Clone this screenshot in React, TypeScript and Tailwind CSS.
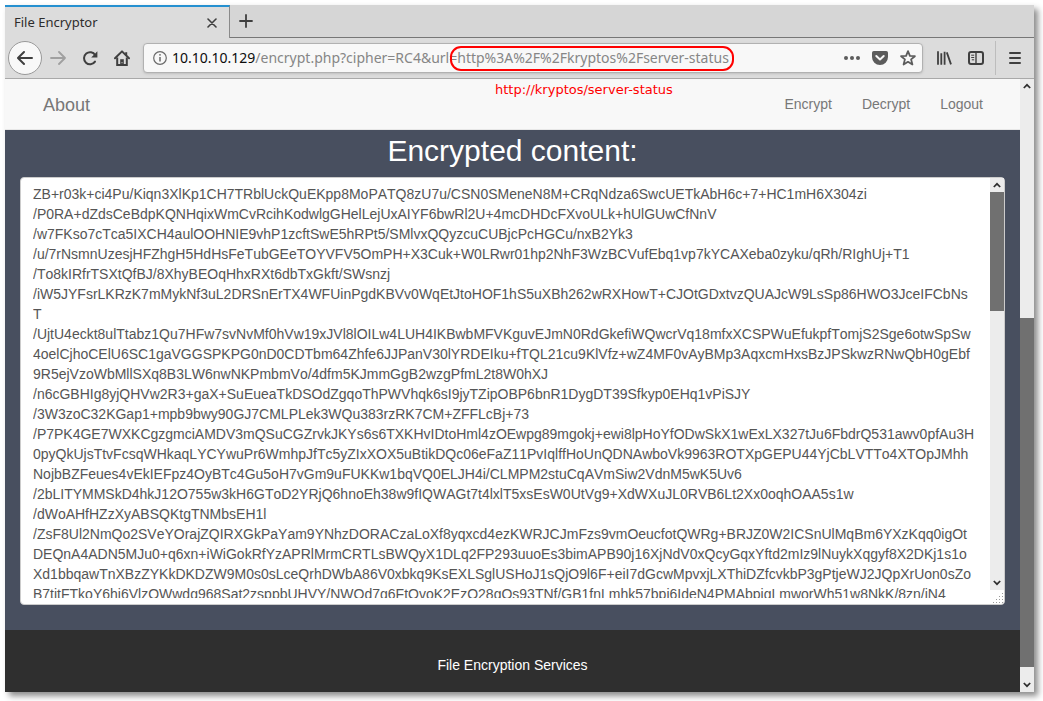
import React from "react";

const CIPHER_LINES = [
  "ZB+r03k+ci4Pu/Kiqn3XlKp1CH7TRblUckQuEKpp8MoPATQ8zU7u/CSN0SMeneN8M+CRqNdza6SwcUETkAbH6c+7+HC1mH6X304zi",
  "/P0RA+dZdsCeBdpKQNHqixWmCvRcihKodwlgGHelLejUxAIYF6bwRl2U+4mcDHDcFXvoULk+hUlGUwCfNnV",
  "/w7FKso7cTca5IXCH4aulOOHNIE9vhP1zcftSwE5hRPt5/SMlvxQQyzcuCUBjcPcHGCu/nxB2Yk3",
  "/u/7rNsmnUzesjHFZhgH5HdHsFeTubGEeTOYVFV5OmPH+X3Cuk+W0LRwr01hp2NhF3WzBCVufEbq1vp7kYCAXeba0zyku/qRh/RIghUj+T1",
  "/To8kIRfrTSXtQfBJ/8XhyBEOqHhxRXt6dbTxGkft/SWsnzj",
  "/iW5JYFsrLKRzK7mMykNf3uL2DRSnErTX4WFUinPgdKBVv0WqEtJtoHOF1hS5uXBh262wRXHowT+CJOtGDxtvzQUAJcW9LsSp86HWO3JceIFCbNs",
  "T",
  "/UjtU4eckt8ulTtabz1Qu7HFw7svNvMf0hVw19xJVl8lOILw4LUH4IKBwbMFVKguvEJmN0RdGkefiWQwcrVq18mfxXCSPWuEfukpfTomjS2Sge6otwSpSw",
  "4oelCjhoCElU6SC1gaVGGSPKPG0nD0CDTbm64Zhfe6JJPanV30lYRDEIku+fTQL21cu9KlVfz+wZ4MF0vAyBMp3AqxcmHxsBzJPSkwzRNwQbH0gEbf",
  "9R5ejVzoWbMllSXq8B3LW6nwNKPmbmVo/4dfm5KJmmGgB2wzgPfmL2t8W0hXJ",
  "/n6cGBHIg8yjQHVw2R3+gaX+SuEueaTkDSOdZgqoThPWVhqk6sI9jyTZipOBP6bnR1DygDT39Sfkyp0EHq1vPiSJY",
  "/3W3zoC32KGap1+mpb9bwy90GJ7CMLPLek3WQu383rzRK7CM+ZFFLcBj+73",
  "/P7PK4GE7WXKCgzgmciAMDV3mQSuCGZrvkJKYs6s6TXKHvIDtoHml4zOEwpg89mgokj+ewi8lpHoYfODwSkX1wExLX327tJu6FbdrQ531awv0pfAu3H",
  "0pyQkUjsTtvFcsqWHkaqLYCYwuPr6WmhpJfTc5yZIxXOX5uBtikDQc06eFaZ11PvIqlffHoUnQDNAwboVk9963ROTXpGEPU44YjCbLVTTo4XTOpJMhh",
  "NojbBZFeues4vEkIEFpz4OyBTc4Gu5oH7vGm9uFUKKw1bqVQ0ELJH4i/CLMPM2stuCqAVmSiw2VdnM5wK5Uv6",
  "/2bLITYMMSkD4hkJ12O755w3kH6GToD2YRjQ6hnoEh38w9fIQWAGt7t4lxlT5xsEsW0UtVg9+XdWXuJL0RVB6Lt2Xx0oqhOAA5s1w",
  "/dWoAHfHZzXyABSQKtgTNMbsEH1l",
  "/ZsF8Ul2NmQo2SVeYOrajZQIRXGkPaYam9YNhzDORACzaLoXf8yqxcd4ezKWRJCJmFzs9vmOeucfotQWRg+BRJZ0W2ICSnUlMqBm6YXzKqq0igOt",
  "DEQnA4ADN5MJu0+q6xn+iWiGokRfYzAPRlMrmCRTLsBWQyX1DLq2FP293uuoEs3bimAPB90j16XjNdV0xQcyGqxYftd2mIz9lNuykXqgyf8X2DKj1s1o",
  "Xd1bbqawTnXBzZYKkDKDZW9M0s0sLceQrhDWbA86V0xbkq9KsEXLSglUSHoJ1sQjO9l6F+eiI7dGcwMpvxjLXThiDZfcvkbP3gPtjeWJ2JQpXrUon0sZo",
  "B7titFTkoY6hi6VlzOWwdg968Sat2zsppbUHVY/NWOd7g6FtOvoK2EzO28gOs93TNf/GB1fnLmhk57bpi6IdeN4PMAbpigLmworWh51w8NkK/8zn/iN4",
];

function Chevron({ down = false }: { down?: boolean }) {
  return (
    <svg width="8" height="6" viewBox="0 0 8 6" fill="none" stroke="#2e2e2e" strokeWidth="1.7">
      <path d={down ? "M0.8 1 4 4.2 7.2 1" : "M0.8 5 4 1.8 7.2 5"} />
    </svg>
  );
}

function ToolButton({ label, children }: { label: string; children: React.ReactNode }) {
  return (
    <button aria-label={label} className="flex h-8 w-8 shrink-0 items-center justify-center text-[#3f3f3f]">
      {children}
    </button>
  );
}

function TabStrip() {
  return (
    <div className="flex h-[33px] bg-[#d6d6d6]">
      <div className="flex w-[225px] items-center justify-between border-t-2 border-r border-t-[#2590d0] border-r-[#8a8a8a] bg-[#dcdcdc] pr-3 pl-[9px]">
        <span className="text-[13px] text-[#2d2d2d]">File Encryptor</span>
        <button aria-label="Close tab">
          <svg width="10" height="10" viewBox="0 0 10 10" stroke="#3f3f3f" strokeWidth="1.6" strokeLinecap="round">
            <path d="M1 1l8 8M9 1 1 9" />
          </svg>
        </button>
      </div>
      <div className="flex flex-1 items-center border-b border-[#777777] pl-[9px]">
        <button aria-label="New tab">
          <svg width="14" height="14" viewBox="0 0 14 14" stroke="#3f3f3f" strokeWidth="1.8" strokeLinecap="round">
            <path d="M7 1v12M1 7h12" />
          </svg>
        </button>
      </div>
    </div>
  );
}

function AddressBar() {
  return (
    <div className="relative ml-[5px] flex h-[30px] min-w-0 flex-1 items-center rounded border border-[#b1b1b1] bg-[#f8f8f8] pr-[6px] pl-[9px] shadow-sm">
      <svg className="shrink-0" width="14" height="14" viewBox="0 0 14 14" fill="none" stroke="#6a6a6a">
        <circle cx="7" cy="7" r="6.3" strokeWidth="1.2" />
        <path d="M7 6v4.6" strokeWidth="1.5" />
        <circle cx="7" cy="3.8" r="0.9" fill="#6a6a6a" stroke="none" />
      </svg>
      <label htmlFor="address" className="pl-[5px] text-sm text-[#0c0c0c]">
        10.10.10.129
      </label>
      <input
        id="address"
        className="min-w-0 flex-1 bg-transparent text-sm text-[#868686] outline-none"
        defaultValue="/encrypt.php?cipher=RC4&url=http%3A%2F%2Fkryptos%2Fserver-status"
      />
      <div className="flex shrink-0 items-center gap-3 text-[#5c5c5c]">
        <button aria-label="Page actions">
          <svg width="16" height="16" viewBox="0 0 16 16" fill="currentColor">
            <circle cx="2" cy="8" r="2" />
            <circle cx="8" cy="8" r="2" />
            <circle cx="14" cy="8" r="2" />
          </svg>
        </button>
        <button aria-label="Save to Pocket">
          <svg width="16" height="16" viewBox="0 0 16 16">
            <path d="M1.8 1h12.4A1.8 1.8 0 0 1 16 2.8V7A8 8 0 0 1 0 7V2.8A1.8 1.8 0 0 1 1.8 1z" fill="currentColor" />
            <path d="M4.3 6 8 9.5 11.7 6" fill="none" stroke="#f8f8f8" strokeWidth="2" strokeLinecap="round" strokeLinejoin="round" />
          </svg>
        </button>
        <button aria-label="Bookmark this page">
          <svg width="16" height="16" viewBox="0 0 16 16" fill="none" stroke="currentColor" strokeWidth="1.8" strokeLinejoin="round">
            <path d="M8 1.2 9.9 5.8 14.9 6.2 11.1 9.4 12.4 14.5 8 11.8 3.6 14.5 4.9 9.4 1.1 6.2 6.1 5.8z" />
          </svg>
        </button>
      </div>
      <div className="pointer-events-none absolute top-[2px] left-[306px] h-[25px] w-[284px] rounded-[11px] border-2 border-[#ff0000]" />
    </div>
  );
}

function Toolbar() {
  return (
    <div className="flex h-[41px] items-center border-b border-[#a9a9a9] bg-[#dcdcdc] px-[3px]">
      <button
        aria-label="Back"
        className="flex h-[34px] w-[34px] shrink-0 items-center justify-center rounded-full border border-[#999999] bg-[#f8f8f8] text-[#3f3f3f]"
      >
        <svg width="16" height="16" viewBox="0 0 16 16" fill="currentColor">
          <path d="M15 7H3.414l4.293-4.293a1 1 0 0 0-1.414-1.414l-6 6a1 1 0 0 0 0 1.414l6 6a1 1 0 0 0 1.414-1.414L3.414 9H15a1 1 0 0 0 0-2z" />
        </svg>
      </button>
      <button aria-label="Forward" disabled className="flex h-8 w-8 shrink-0 items-center justify-center text-[#a0a0a0]">
        <svg width="16" height="16" viewBox="0 0 16 16" fill="none" stroke="currentColor" strokeWidth="1.8" strokeLinecap="round" strokeLinejoin="round">
          <path d="M1 8h14M9 2l6 6-6 6" />
        </svg>
      </button>
      <ToolButton label="Reload">
        <svg width="16" height="16" viewBox="0 0 16 16" fill="none" stroke="currentColor">
          <path d="M13.2 5.2A6 6 0 1 0 13 11.6" strokeWidth="2" strokeLinecap="round" />
          <path d="M15.4 1.2v6.3H9.2z" fill="currentColor" stroke="none" />
        </svg>
      </ToolButton>
      <ToolButton label="Home">
        <svg width="16" height="16" viewBox="0 0 16 16" fill="none" stroke="currentColor" strokeWidth="2">
          <path d="M1 8.2 8 1.4l7 6.8" strokeLinecap="round" strokeLinejoin="round" />
          <path d="M3.2 7.5V15h9.6V7.5" />
          <path d="M12.2 2.2v3" />
          <path d="M6.2 15V9.2h3.6V15z" fill="currentColor" stroke="none" />
          <path d="M8 12.2v1" stroke="#dcdcdc" strokeWidth="1" />
        </svg>
      </ToolButton>
      <AddressBar />
      <div className="ml-[5px] flex items-center">
        <ToolButton label="Library">
          <svg width="16" height="16" viewBox="0 0 16 16" fill="none" stroke="currentColor" strokeWidth="2">
            <path d="M2 1.2v13.6M5.3 3.2v11.6M8.6 1.8v13M10.8 2.4l4.2 12" strokeWidth="1.8" />
          </svg>
        </ToolButton>
        <ToolButton label="Sidebars">
          <svg width="16" height="16" viewBox="0 0 16 16" fill="none" stroke="currentColor">
            <rect x="1" y="2" width="14" height="12" rx="2" strokeWidth="2" />
            <path d="M8 2v12" strokeWidth="1.4" />
            <path d="M3.2 5.2h3M3.2 7.5h3M3.8 9.8h2.4" strokeWidth="1" />
          </svg>
        </ToolButton>
        <div className="mx-[3px] h-[34px] w-px bg-[#bdbdbd]" />
        <ToolButton label="Menu">
          <svg width="12" height="14" viewBox="0 0 12 14" stroke="currentColor" strokeWidth="2" strokeLinecap="round">
            <path d="M1 2h10M1 7h10M1 12h10" />
          </svg>
        </ToolButton>
      </div>
    </div>
  );
}

function SiteNav() {
  return (
    <nav className="relative flex h-[51px] items-center justify-between border-b border-[#e7e7e7] bg-[#f8f8f8] pr-[37px] pl-[38px] text-[#777777]">
      <a href="#about" className="pt-px text-lg">
        About
      </a>
      <div className="flex gap-[30px] text-sm">
        <a href="#encrypt">Encrypt</a>
        <a href="#decrypt">Decrypt</a>
        <a href="#logout">Logout</a>
      </div>
      <span className="absolute top-px left-[490px] font-['DejaVu_Sans',sans-serif] text-[13px] leading-5 text-[#ff0000]">
        http://kryptos/server-status
      </span>
    </nav>
  );
}

function CipherOutput() {
  return (
    <div className="flex rounded border border-[#cccccc] bg-white">
      <textarea
        id="cipher"
        readOnly
        wrap="off"
        className="my-[6px] ml-3 block h-[414px] min-w-0 flex-1 resize-none overflow-hidden text-sm leading-5 whitespace-pre text-[#555555] outline-none [font-kerning:none]"
        defaultValue={CIPHER_LINES.join("\n")}
      />
      <div className="flex w-[14px] flex-col">
        <div className="flex h-[14px] items-center justify-center bg-[#ececec]">
          <Chevron />
        </div>
        <div className="flex flex-1 flex-col bg-[#ececec]">
          <div className="h-[31%] bg-[#707070]" />
        </div>
        <div className="flex h-[14px] items-center justify-center bg-[#ececec]">
          <Chevron down />
        </div>
        <svg width="14" height="14" viewBox="0 0 14 14" fill="#9a9a9a">
          <path d="M12 3h1v1h-1zM12 6h1v1h-1zM9 6h1v1H9zM12 9h1v1h-1zM9 9h1v1H9zM6 9h1v1H6zM12 12h1v1h-1zM9 12h1v1H9zM6 12h1v1H6zM3 12h1v1H3z" />
        </svg>
      </div>
    </div>
  );
}

function PageScrollbar() {
  return (
    <div className="flex w-[14px] shrink-0 flex-col bg-[#ececec]">
      <div className="flex h-[14px] items-center justify-center">
        <Chevron />
      </div>
      <div className="grow-[225]" />
      <div className="grow-[349] bg-[#707070]" />
      <div className="grow-[11]" />
      <div className="flex h-[14px] items-center justify-center">
        <Chevron down />
      </div>
    </div>
  );
}

export default function App() {
  return (
    <div className="flex min-h-screen bg-white pt-[5px] pr-[9px] pb-[9px] pl-[5px]">
      <div className="flex min-w-0 flex-1 flex-col shadow-[4px_4px_6px_rgba(0,0,0,0.45)]">
        <header className="font-['Noto_Sans',sans-serif]">
          <TabStrip />
          <Toolbar />
        </header>
        <div className="flex flex-1 font-['Liberation_Sans',Arial,sans-serif]">
          <div className="flex min-w-0 flex-1 flex-col">
            <SiteNav />
            <main className="bg-[#484f5f] px-[15px] pt-1 pb-[25px]">
              <h2 className="mb-[10px] text-center text-3xl leading-[33px] text-white">
                <label htmlFor="cipher">Encrypted content:</label>
              </h2>
              <CipherOutput />
            </main>
            <footer className="flex flex-1 justify-center bg-[#2f2f2f] pt-[25px] text-sm leading-5 text-white">
              File Encryption Services
            </footer>
          </div>
          <PageScrollbar />
        </div>
      </div>
    </div>
  );
}
